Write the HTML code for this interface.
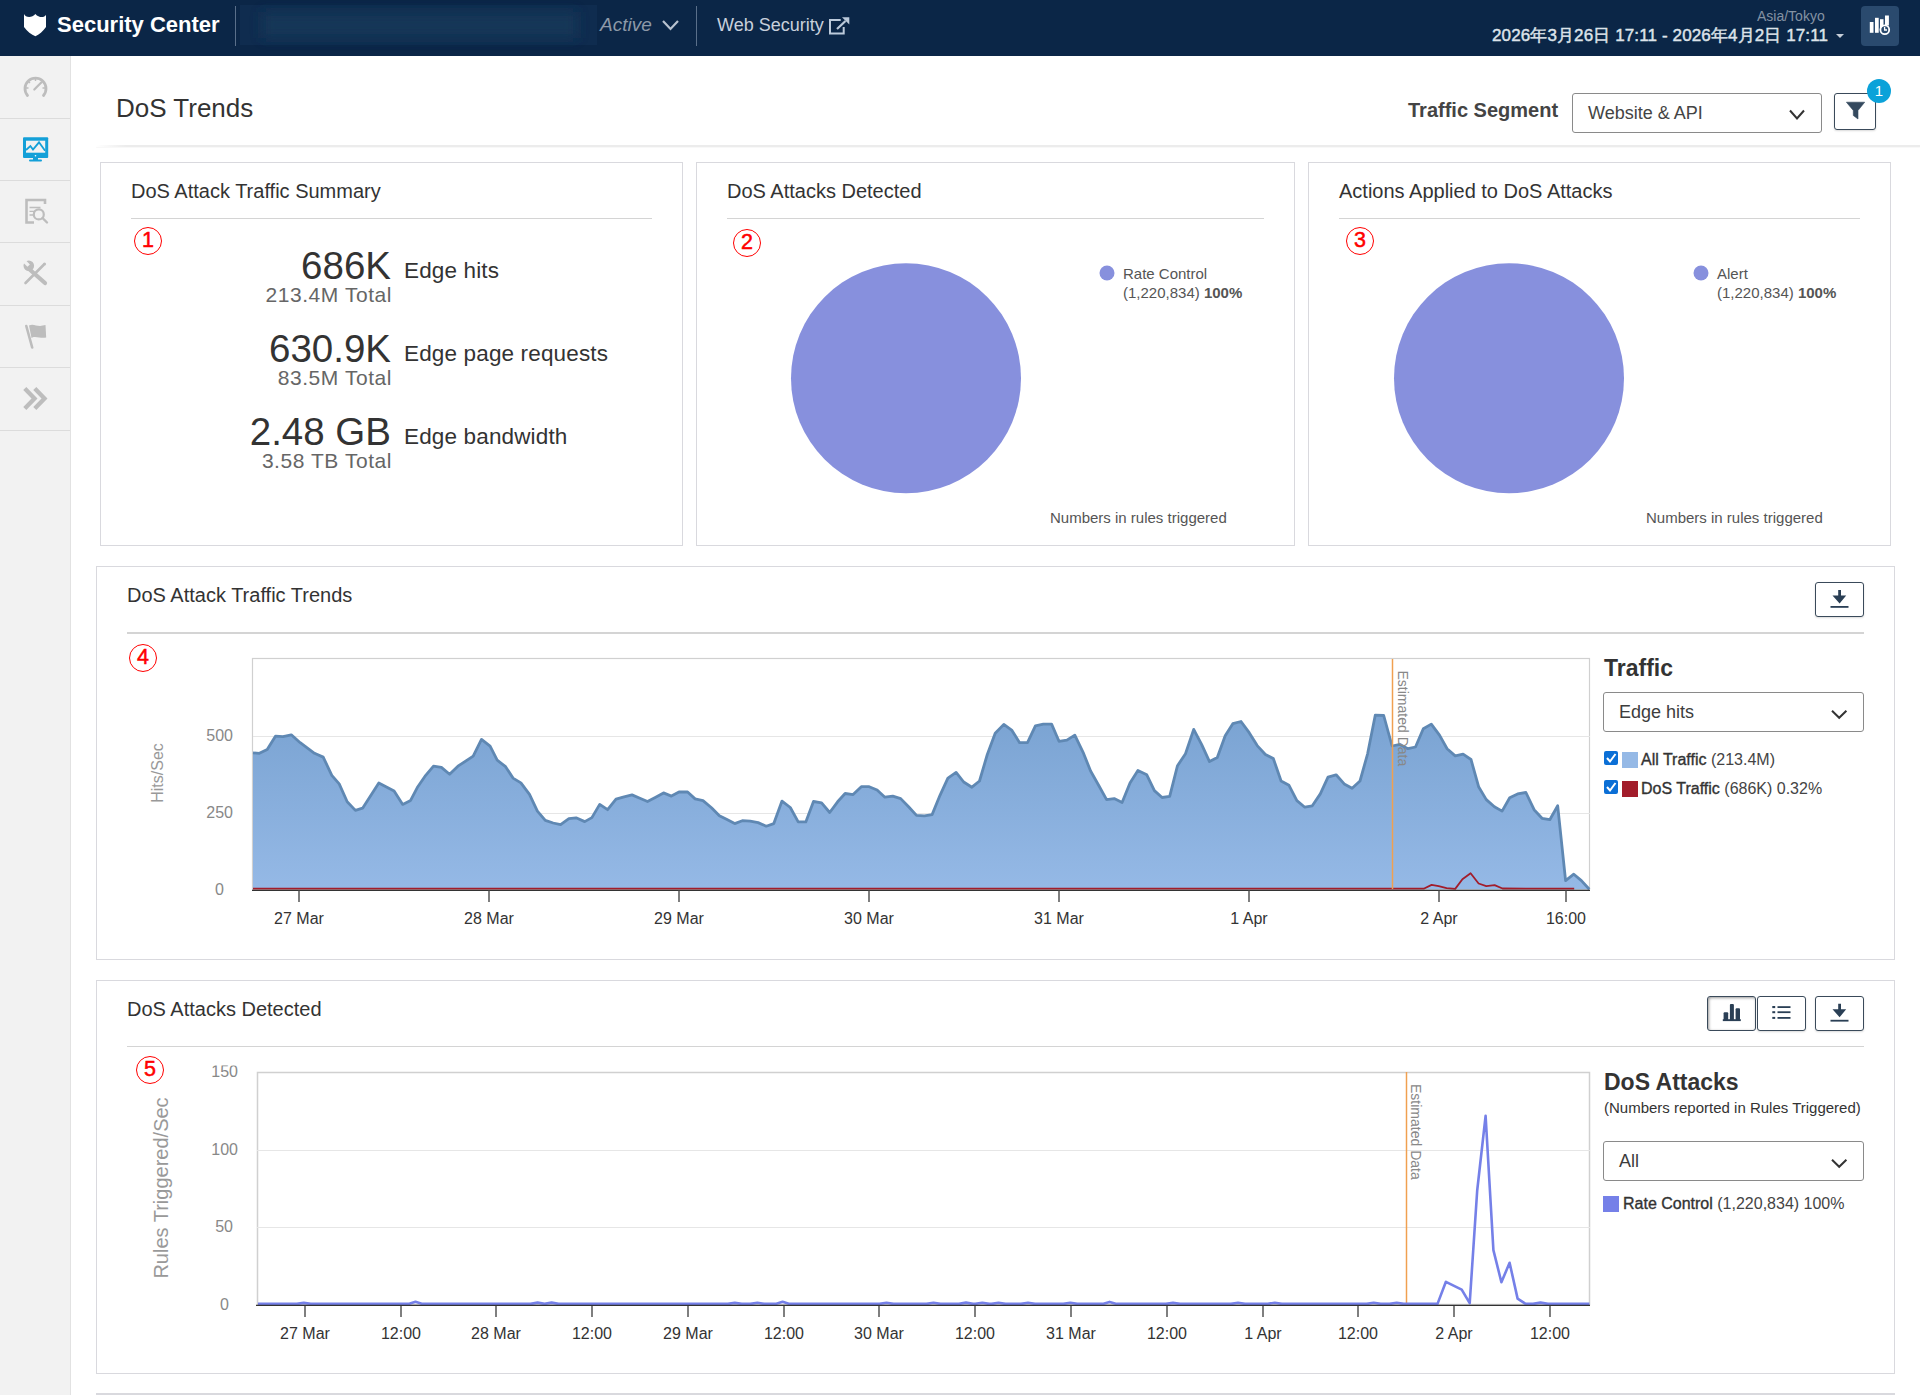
<!DOCTYPE html>
<html><head><meta charset="utf-8">
<style>
*{box-sizing:border-box;margin:0;padding:0}
html,body{width:1920px;height:1395px;overflow:hidden;background:#fff;font-family:"Liberation Sans",sans-serif;color:#333}
.a{position:absolute;white-space:nowrap;line-height:1}
#hdr{position:absolute;left:0;top:0;width:1920px;height:56px;background:#0b2647}
#side{position:absolute;left:0;top:56px;width:71px;height:1339px;background:#f2f2f2;border-right:1px solid #e2e2e2}
.sd{position:absolute;left:0;width:70px;height:1px;background:#dcdcdc}
.card{position:absolute;border:1px solid #d9d9de;background:#fff}
.hr{position:absolute;height:1px;background:#d4d4d4}
.circ{position:absolute;border:1.3px solid #f00;border-radius:50%;color:#f00;font-size:21.5px;text-align:center;line-height:25px;-webkit-text-stroke:0.5px #f00}
.btn{position:absolute;border:1px solid #3a4a5a;border-radius:3px;background:#fff;box-shadow:0 1px 2px rgba(0,0,0,.15)}
.sel{position:absolute;border:1px solid #8a8a8a;border-radius:3px;background:#fff}
</style></head><body>
<div id="hdr"></div>
<!-- header -->
<svg class="a" style="left:0;top:0" width="1920" height="56">
 <defs><filter id="bl" x="-10%" y="-50%" width="120%" height="200%"><feGaussianBlur stdDeviation="6"/></filter></defs>
 <rect x="240" y="5" width="357" height="40" fill="#0f2c4f"/><rect x="262" y="12" width="315" height="26" fill="#183859" filter="url(#bl)" opacity="0.9"/>
 <path d="M24,14 C25.5,17.8 32,18.2 35.4,14 C39,18.2 44.5,17.8 46,14.8 L46,27 C43,31.5 39,34.5 35.4,36.3 C31.5,34.5 27,31.5 24,27 Z" fill="#fff"/>
 <line x1="235.5" y1="6" x2="235.5" y2="46" stroke="#5a6f8a" stroke-width="1"/>
 <line x1="696.5" y1="6" x2="696.5" y2="46" stroke="#5a6f8a" stroke-width="1"/>
 <path d="M663,21 L670.5,29 L678,21" fill="none" stroke="#b8c2cf" stroke-width="2.2"/>
 <g fill="none" stroke="#bccadb" stroke-width="2"><path d="M840.7,19.9 H830 V33.5 H843.7 V27.1"/><path d="M837,29 L845.5,21" stroke-width="2.2"/></g><path d="M842,17.2 H849.3 V24.5 Z" fill="#bccadb"/>
 <path d="M1836,34 L1844,34 L1840,38 Z" fill="#c5cdd8"/>
 <rect x="1861" y="6" width="38" height="40" rx="4" fill="#2a4a6e"/>
 <g fill="#fff"><rect x="1869.8" y="22" width="3.7" height="10.8"/><rect x="1875" y="17.8" width="3.7" height="15"/><rect x="1880" y="19.2" width="3.5" height="10"/><rect x="1885" y="15.5" width="3.9" height="10"/></g>
 <circle cx="1884.8" cy="29.8" r="4.4" fill="#2a4a6e" stroke="#fff" stroke-width="1.8"/>
 <path d="M1884.6,27 V30 H1887" stroke="#fff" stroke-width="1.3" fill="none"/>
</svg>
<div class="a" id="t_sc" style="left:57px;top:14px;font-size:22px;font-weight:bold;color:#fff">Security Center</div>
<div class="a" id="t_act" style="left:600px;top:15px;font-size:19px;font-style:italic;color:#8d99a8">Active</div>
<div class="a" id="t_ws" style="left:717px;top:16px;font-size:18px;color:#c8d0dc">Web Security</div>
<div class="a" id="t_tz" style="left:1757px;top:9px;font-size:14px;color:#8492a3">Asia/Tokyo</div>
<div class="a" id="t_dt" style="left:1492px;top:27px;font-size:17px;letter-spacing:0.12px;-webkit-text-stroke:0.45px #dde3ea;color:#dde3ea">2026年3月26日 17:11 - 2026年4月2日 17:11</div>

<div id="side">
 <div class="sd" style="top:62px"></div><div class="sd" style="top:124px"></div><div class="sd" style="top:186px"></div><div class="sd" style="top:249px"></div><div class="sd" style="top:311px"></div><div class="sd" style="top:374px"></div>
</div>
<svg class="a" style="left:0;top:0" width="70" height="440">
 <path d="M27.5,95.5 A10.5,10.5 0 1 1 43.5,95.5" fill="none" stroke="#bdbdbd" stroke-width="2.8" stroke-linecap="round"/>
 <g stroke="#bdbdbd" stroke-width="1.4"><path d="M35.5,78.5 V81 M28.5,81.5 L30,83 M42.5,81.5 L41,83 M26,88 H28.5 M45,88 H42.5"/></g>
 <path d="M34.3,89.5 L41,82.7" stroke="#bdbdbd" stroke-width="2.2" stroke-linecap="round"/>
 <rect x="23" y="137.3" width="25.2" height="20.7" rx="1" fill="#14a0d8"/>
 <rect x="26" y="140.7" width="19.2" height="12" fill="#f2f2f2"/>
 <path d="M26,150 L30.4,146 L33,149.5 L39,142.3 L45.1,150.8" fill="none" stroke="#14a0d8" stroke-width="1.8"/>
 <circle cx="35.5" cy="155.7" r="0.8" fill="#fff"/>
 <rect x="33" y="158" width="5" height="2" fill="#14a0d8"/><rect x="29" y="159.5" width="13" height="2" rx="1" fill="#14a0d8"/>
 <g fill="none" stroke="#bdbdbd"><path d="M45,204 V200 H26.5 V222.5 H34" stroke-width="2.6"/><path d="M29.5,207.5 H40.5 M29.5,211.3 H35 M29.5,215 H34" stroke-width="1.3"/><circle cx="38.8" cy="214.4" r="5" stroke-width="2.2"/><path d="M42.5,218 L47,222.5" stroke-width="2.4" stroke-linecap="round"/></g>
 <g stroke="#bdbdbd" stroke-linecap="round"><path d="M28.5,268.5 L45,283" stroke-width="4.2"/><path d="M25.5,283 L43.5,265" stroke-width="2.6"/></g>
 <circle cx="28.8" cy="265.8" r="5.3" fill="#bdbdbd"/>
 <rect x="-1.7" y="-5" width="3.4" height="6.5" transform="translate(27.6,264.6) rotate(-45)" fill="#f2f2f2"/>
 <circle cx="44.5" cy="264" r="1.6" fill="#bdbdbd"/>
 <g fill="#bdbdbd"><path d="M26.3,326 L32.2,347.5" stroke="#bdbdbd" stroke-width="2.6" stroke-linecap="round"/><path d="M29,325.5 C33,323.5 36,326 40,326 L45.5,325 L46.2,337.5 C42,338.5 39,337 35,337 C33.5,337 32,337.5 31.5,338 Z"/></g>
 <g fill="none" stroke="#bdbdbd" stroke-width="4.3"><path d="M24.8,388.6 L34.5,398.6 L24.8,408.6"/><path d="M34.8,388.6 L44.5,398.6 L34.8,408.6"/></g>
</svg>

<!-- title row -->
<div class="a" id="t_title" style="left:116px;top:95px;font-size:26px;color:#333">DoS Trends</div>
<div class="a" style="left:96px;top:145px;width:1824px;height:2px;background:linear-gradient(to right,rgba(236,236,236,0) 0,#ececec 30px);box-shadow:0 1px 1px rgba(0,0,0,.03)"></div>
<div class="a" id="t_seg" style="left:1408px;top:100px;font-size:20px;font-weight:bold;color:#444">Traffic Segment</div>
<div class="sel" style="left:1572px;top:93px;width:250px;height:40px"></div>
<div class="a" id="t_wa" style="left:1588px;top:104px;font-size:18px;color:#444">Website &amp; API</div>
<div class="btn" style="left:1834px;top:93px;width:42px;height:37px"></div>

<!-- cards -->
<div class="card" style="left:100px;top:162px;width:583px;height:384px"></div>
<div class="card" style="left:696px;top:162px;width:599px;height:384px"></div>
<div class="card" style="left:1308px;top:162px;width:583px;height:384px"></div>
<div class="card" style="left:96px;top:566px;width:1799px;height:394px"></div>
<div class="card" style="left:96px;top:980px;width:1799px;height:394px"></div>
<div class="a" style="left:96px;top:1393px;width:1799px;height:2px;background:#d9d9de"></div>

<div class="hr" style="left:131px;top:218px;width:521px"></div>
<div class="hr" style="left:727px;top:218px;width:537px"></div>
<div class="hr" style="left:1339px;top:218px;width:521px"></div>
<div class="hr" style="left:127px;top:632px;width:1737px;height:2px"></div>
<div class="hr" style="left:127px;top:1046px;width:1737px"></div>

<div class="a" id="t_c1" style="left:131px;top:181px;font-size:20px;color:#333">DoS Attack Traffic Summary</div>
<div class="a" id="t_c2" style="left:727px;top:181px;font-size:20px;color:#333">DoS Attacks Detected</div>
<div class="a" id="t_c3" style="left:1339px;top:181px;font-size:20px;color:#333">Actions Applied to DoS Attacks</div>
<div class="a" id="t_c4" style="left:127px;top:585px;font-size:20px;color:#333">DoS Attack Traffic Trends</div>
<div class="a" id="t_c5" style="left:127px;top:999px;font-size:20px;color:#333">DoS Attacks Detected</div>

<div class="circ" style="left:134px;top:227px;width:28px;height:28px">1</div>
<div class="circ" style="left:733px;top:229px;width:28px;height:28px">2</div>
<div class="circ" style="left:1346px;top:227px;width:28px;height:28px">3</div>
<div class="circ" style="left:129px;top:644px;width:28px;height:28px">4</div>
<div class="circ" style="left:136px;top:1056px;width:28px;height:28px">5</div>

<!-- card1 stats -->
<div class="a" style="right:1529px;top:247px;font-size:38.5px;color:#333">686K</div>
<div class="a" style="left:404px;top:260px;font-size:22.5px;letter-spacing:0.15px;color:#333">Edge hits</div>
<div class="a" style="right:1528px;top:284px;font-size:21px;letter-spacing:0.55px;color:#666">213.4M Total</div>
<div class="a" style="right:1529px;top:330px;font-size:38.5px;color:#333">630.9K</div>
<div class="a" style="left:404px;top:343px;font-size:22.5px;letter-spacing:0.15px;color:#333">Edge page requests</div>
<div class="a" style="right:1528px;top:367px;font-size:21px;letter-spacing:0.55px;color:#666">83.5M Total</div>
<div class="a" style="right:1529px;top:413px;font-size:38.5px;color:#333">2.48 GB</div>
<div class="a" style="left:404px;top:426px;font-size:22.5px;letter-spacing:0.15px;color:#333">Edge bandwidth</div>
<div class="a" style="right:1528px;top:450px;font-size:21px;letter-spacing:0.55px;color:#666">3.58 TB Total</div>

<!-- pie legends -->
<div class="a" style="left:1123px;top:266px;font-size:15px;color:#555">Rate Control</div>
<div class="a" style="left:1123px;top:285px;font-size:15px;color:#555">(1,220,834) <b>100%</b></div>
<div class="a" style="left:1050px;top:510px;font-size:15px;color:#555">Numbers in rules triggered</div>
<div class="a" style="left:1717px;top:266px;font-size:15px;color:#555">Alert</div>
<div class="a" style="left:1717px;top:285px;font-size:15px;color:#555">(1,220,834) <b>100%</b></div>
<div class="a" style="left:1646px;top:510px;font-size:15px;color:#555">Numbers in rules triggered</div>

<!-- chart buttons -->
<div class="btn" style="left:1815px;top:582px;width:49px;height:35px"></div>
<div class="btn" style="left:1707px;top:996px;width:49px;height:35px;box-shadow:inset 1px 1px 3px rgba(0,0,0,.4)"></div>
<div class="btn" style="left:1757px;top:996px;width:49px;height:35px"></div>
<div class="btn" style="left:1815px;top:996px;width:49px;height:35px"></div>

<!-- chart legends -->
<div class="a" style="left:1604px;top:657px;font-size:23px;font-weight:bold;color:#333">Traffic</div>
<div class="sel" style="left:1603px;top:692px;width:261px;height:40px"></div>
<div class="a" style="left:1619px;top:703px;font-size:18px;color:#3d3d3d">Edge hits</div>
<div class="a" style="left:1641px;top:752px;font-size:16px;color:#333"><span style="-webkit-text-stroke:0.35px #333">All Traffic</span> <span style="color:#444">(213.4M)</span></div>
<div class="a" style="left:1641px;top:781px;font-size:16px;color:#333"><span style="-webkit-text-stroke:0.35px #333">DoS Traffic</span> <span style="color:#444">(686K) 0.32%</span></div>
<div class="a" style="left:1604px;top:1071px;font-size:23px;font-weight:bold;color:#333">DoS Attacks</div>
<div class="a" style="left:1604px;top:1100px;font-size:15px;color:#333">(Numbers reported in Rules Triggered)</div>
<div class="sel" style="left:1603px;top:1141px;width:261px;height:40px"></div>
<div class="a" style="left:1619px;top:1152px;font-size:18px;color:#3d3d3d">All</div>
<div class="a" style="left:1623px;top:1196px;font-size:16px;color:#333"><span style="-webkit-text-stroke:0.35px #333">Rate Control</span> <span style="color:#444">(1,220,834) 100%</span></div>

<!-- chart axis labels -->
<div class="a" style="left:0;top:0;width:0;height:0">
</div>
<svg class="a" style="left:0;top:0" width="1920" height="1395" font-family="Liberation Sans, sans-serif">
 <defs><clipPath id="c150"><rect x="200" y="1065.5" width="60" height="20"/></clipPath><linearGradient id="ag" x1="0" y1="0" x2="0" y2="1"><stop offset="0" stop-color="#7aa3d2"/><stop offset="1" stop-color="#95b9e6"/></linearGradient></defs>
 <!-- select chevrons -->
 <g fill="none" stroke="#333" stroke-width="2"><path d="M1790,110.5 L1797,118.5 L1804,110.5"/><path d="M1832,710.8 L1839.2,717.8 L1846.4,710.8"/><path d="M1832,1159.8 L1839.2,1166.8 L1846.4,1159.8"/></g>
 <!-- filter icon -->
 <path d="M1846.4,102.2 H1864.7 L1858,110.5 V119 L1853.3,115.5 V110.5 Z" fill="#34495e" stroke="#34495e" stroke-width="0.6" stroke-linejoin="round"/>
 <circle cx="1879" cy="91" r="12" fill="#0ba2d9"/>
 <text x="1879" y="96" font-size="15" fill="#fff" text-anchor="middle">1</text>
 <!-- download icons -->
 <g fill="#2a3f55">
 <path d="M1838.2,590 H1841 V595.5 H1846.2 L1839.6,603.5 L1832.5,595.5 H1838.2 Z"/><rect x="1830.5" y="606" width="18" height="1.8"/>
 <path d="M1838.2,1003.7 H1841 V1009.2 H1846.2 L1839.6,1017.3 L1832.5,1009.2 H1838.2 Z"/><rect x="1830.5" y="1019.8" width="18" height="1.8"/>
 <rect x="1723.6" y="1012.3" width="4.6" height="8" rx="1"/><rect x="1729.9" y="1004" width="4" height="16.5" rx="1"/><rect x="1735.6" y="1008.3" width="4.4" height="12" rx="1"/><rect x="1722.8" y="1019.2" width="18" height="1.9"/>
 <rect x="1772.3" y="1006" width="2.9" height="2.1"/><rect x="1772.3" y="1011.2" width="2.9" height="2"/><rect x="1772.3" y="1016.9" width="2.9" height="2"/>
 <rect x="1777.5" y="1006.2" width="13" height="1.8"/><rect x="1777.5" y="1011.3" width="13" height="1.8"/><rect x="1777.5" y="1017" width="13" height="1.8"/></g>
 <!-- pies -->
 <circle cx="906" cy="378.2" r="115" fill="#8790dd"/>
 <circle cx="1107" cy="273" r="7.5" fill="#8790dd"/>
 <circle cx="1509" cy="378.2" r="115" fill="#8790dd"/>
 <circle cx="1701" cy="273" r="7.5" fill="#8790dd"/>
 <!-- chart4 -->
 <rect x="252.5" y="658.5" width="1337" height="231" fill="#fff" stroke="#d0d0d0" stroke-width="1.2"/>
 <line x1="253" y1="736.5" x2="1590" y2="736.5" stroke="#e6e6e6"/>
 <line x1="253" y1="813.5" x2="1590" y2="813.5" stroke="#e6e6e6"/>
 <path d="M253,889 L253.0,752.8 L259.4,753.3 L267.2,749.5 L275.6,736.1 L283.0,736.6 L291.3,734.8 L300.2,742.7 L314.5,753.3 L323.2,757.1 L331.8,775.3 L339.2,783.9 L347.2,801.8 L355.4,810.4 L362.6,808.2 L378.8,782.9 L394.1,791.0 L402.7,804.4 L410.6,800.4 L417.8,786.7 L425.7,775.3 L433.5,766.2 L441.4,767.4 L449.6,774.3 L457.9,766.2 L473.2,756.2 L481.5,739.4 L490.1,746.2 L497.2,760.2 L505.6,766.7 L513.0,778.1 L520.9,782.9 L529.5,794.3 L537.4,811.1 L545.3,820.4 L553.2,823.0 L560.6,824.7 L568.9,818.7 L576.1,817.8 L584.7,821.6 L591.9,817.6 L599.7,804.4 L607.6,809.7 L616.0,799.2 L624.1,796.8 L632.0,794.9 L639.9,798.2 L647.5,801.5 L655.7,797.2 L663.5,792.9 L671.4,796.1 L679.0,792.0 L687.6,792.0 L695.1,798.9 L703.0,800.6 L711.5,807.8 L719.4,815.8 L726.5,819.3 L734.7,823.6 L742.3,820.7 L750.2,821.1 L758.1,822.6 L766.2,826.2 L773.8,823.6 L782.0,801.1 L790.3,807.5 L798.2,821.9 L805.8,821.9 L813.5,801.5 L821.6,802.9 L829.7,812.5 L837.6,801.8 L845.1,793.5 L853.1,794.6 L861.3,786.7 L869.2,786.7 L877.1,790.0 L884.9,797.2 L892.8,796.1 L900.7,798.6 L908.6,806.8 L916.5,815.4 L924.4,815.8 L932.1,814.6 L940.0,795.3 L947.9,778.1 L956.1,772.4 L963.7,782.0 L971.9,787.2 L979.5,781.0 L987.3,754.5 L995.2,733.3 L1003.8,724.4 L1012.0,730.4 L1019.6,742.7 L1027.5,742.7 L1035.4,725.8 L1043.3,724.1 L1051.6,724.1 L1059.0,741.3 L1066.9,740.1 L1074.8,735.1 L1083.1,752.3 L1090.6,771.0 L1098.9,785.7 L1106.6,799.6 L1114.2,798.6 L1122.1,802.5 L1130.0,782.9 L1137.9,770.5 L1146.8,774.8 L1154.4,790.6 L1162.1,797.5 L1169.7,796.3 L1177.5,765.7 L1185.5,753.8 L1193.7,729.4 L1201.6,744.4 L1209.5,761.6 L1217.3,757.6 L1225.2,735.8 L1232.8,723.7 L1241.0,721.5 L1249.2,732.7 L1257.2,745.6 L1265.4,754.5 L1273.3,758.5 L1281.1,781.0 L1289.0,785.3 L1296.9,800.6 L1304.8,807.2 L1312.3,805.8 L1320.3,793.9 L1328.0,777.1 L1336.1,774.8 L1344.2,783.9 L1352.1,788.2 L1360.0,781.0 L1367.6,753.8 L1375.3,715.1 L1383.7,715.5 L1392.1,746.0 L1400.0,744.4 L1407.9,748.7 L1415.5,747.0 L1423.3,728.7 L1431.3,724.1 L1439.5,735.1 L1447.1,748.7 L1455.2,755.9 L1463.1,754.2 L1471.0,759.5 L1478.6,786.7 L1486.3,799.6 L1494.4,806.8 L1502.1,811.1 L1509.7,797.8 L1517.6,793.9 L1525.9,792.5 L1534.1,809.7 L1542.0,818.3 L1549.8,819.7 L1557.7,805.8 L1565.6,880.6 L1573.8,874.2 L1581.4,880.6 L1589.3,889.2 Z" fill="url(#ag)"/>
 <polyline points="253.0,752.8 259.4,753.3 267.2,749.5 275.6,736.1 283.0,736.6 291.3,734.8 300.2,742.7 314.5,753.3 323.2,757.1 331.8,775.3 339.2,783.9 347.2,801.8 355.4,810.4 362.6,808.2 378.8,782.9 394.1,791.0 402.7,804.4 410.6,800.4 417.8,786.7 425.7,775.3 433.5,766.2 441.4,767.4 449.6,774.3 457.9,766.2 473.2,756.2 481.5,739.4 490.1,746.2 497.2,760.2 505.6,766.7 513.0,778.1 520.9,782.9 529.5,794.3 537.4,811.1 545.3,820.4 553.2,823.0 560.6,824.7 568.9,818.7 576.1,817.8 584.7,821.6 591.9,817.6 599.7,804.4 607.6,809.7 616.0,799.2 624.1,796.8 632.0,794.9 639.9,798.2 647.5,801.5 655.7,797.2 663.5,792.9 671.4,796.1 679.0,792.0 687.6,792.0 695.1,798.9 703.0,800.6 711.5,807.8 719.4,815.8 726.5,819.3 734.7,823.6 742.3,820.7 750.2,821.1 758.1,822.6 766.2,826.2 773.8,823.6 782.0,801.1 790.3,807.5 798.2,821.9 805.8,821.9 813.5,801.5 821.6,802.9 829.7,812.5 837.6,801.8 845.1,793.5 853.1,794.6 861.3,786.7 869.2,786.7 877.1,790.0 884.9,797.2 892.8,796.1 900.7,798.6 908.6,806.8 916.5,815.4 924.4,815.8 932.1,814.6 940.0,795.3 947.9,778.1 956.1,772.4 963.7,782.0 971.9,787.2 979.5,781.0 987.3,754.5 995.2,733.3 1003.8,724.4 1012.0,730.4 1019.6,742.7 1027.5,742.7 1035.4,725.8 1043.3,724.1 1051.6,724.1 1059.0,741.3 1066.9,740.1 1074.8,735.1 1083.1,752.3 1090.6,771.0 1098.9,785.7 1106.6,799.6 1114.2,798.6 1122.1,802.5 1130.0,782.9 1137.9,770.5 1146.8,774.8 1154.4,790.6 1162.1,797.5 1169.7,796.3 1177.5,765.7 1185.5,753.8 1193.7,729.4 1201.6,744.4 1209.5,761.6 1217.3,757.6 1225.2,735.8 1232.8,723.7 1241.0,721.5 1249.2,732.7 1257.2,745.6 1265.4,754.5 1273.3,758.5 1281.1,781.0 1289.0,785.3 1296.9,800.6 1304.8,807.2 1312.3,805.8 1320.3,793.9 1328.0,777.1 1336.1,774.8 1344.2,783.9 1352.1,788.2 1360.0,781.0 1367.6,753.8 1375.3,715.1 1383.7,715.5 1392.1,746.0 1400.0,744.4 1407.9,748.7 1415.5,747.0 1423.3,728.7 1431.3,724.1 1439.5,735.1 1447.1,748.7 1455.2,755.9 1463.1,754.2 1471.0,759.5 1478.6,786.7 1486.3,799.6 1494.4,806.8 1502.1,811.1 1509.7,797.8 1517.6,793.9 1525.9,792.5 1534.1,809.7 1542.0,818.3 1549.8,819.7 1557.7,805.8 1565.6,880.6 1573.8,874.2 1581.4,880.6 1589.3,889.2" fill="none" stroke="#5f88b3" stroke-width="2.8" stroke-linejoin="round"/>
 <polyline points="253.0,888.7 1423.7,888.7 1431.6,884.9 1438.7,886.1 1446.6,888.1 1455.2,888.9 1462.4,879.2 1470.6,873.2 1478.6,883.5 1486.3,886.1 1494.6,885.2 1502.5,888.5 1574.2,888.7" fill="none" stroke="#a21d2b" stroke-width="1.8" stroke-linejoin="round"/>
 <line x1="1392.5" y1="659" x2="1392.5" y2="889" stroke="#f0a050" stroke-width="1.5"/>
 <line x1="252" y1="890.3" x2="1590" y2="890.3" stroke="#333" stroke-width="1.3"/>
 <g stroke="#555" stroke-width="1.5"><path d="M299,890.5 V902 M489,890.5 V902 M679,890.5 V902 M869,890.5 V902 M1059,890.5 V902 M1249,890.5 V902 M1439,890.5 V902 M1566,890.5 V902"/></g>
 <g font-size="16" fill="#333" text-anchor="middle"><text x="299" y="924">27 Mar</text><text x="489" y="924">28 Mar</text><text x="679" y="924">29 Mar</text><text x="869" y="924">30 Mar</text><text x="1059" y="924">31 Mar</text><text x="1249" y="924">1 Apr</text><text x="1439" y="924">2 Apr</text><text x="1566" y="924">16:00</text></g>
 <g font-size="16" fill="#888" text-anchor="end"><text x="233" y="741">500</text><text x="233" y="818">250</text><text x="224" y="895">0</text></g>
 <text transform="translate(163,773) rotate(-90)" font-size="16" fill="#999" text-anchor="middle">Hits/Sec</text>
 <text transform="translate(1398,670.5) rotate(90)" font-size="14" fill="#888">Estimated Data</text>
 <!-- legend chart4 -->
 <rect x="1604" y="751" width="14" height="14" rx="2" fill="#0b6fd6"/><path d="M1607,758 L1610,761.5 L1615.5,754" fill="none" stroke="#fff" stroke-width="2"/>
 <rect x="1604" y="780" width="14" height="14" rx="2" fill="#0b6fd6"/><path d="M1607,787 L1610,790.5 L1615.5,783" fill="none" stroke="#fff" stroke-width="2"/>
 <rect x="1622" y="752" width="16" height="16" fill="#95b9e6"/>
 <rect x="1622" y="781" width="16" height="16" fill="#a21d2b"/>
 <!-- chart5 -->
 <rect x="257.5" y="1072.5" width="1332" height="232" fill="#fff" stroke="#d0d0d0" stroke-width="1.5"/>
 <line x1="257" y1="1150.5" x2="1590" y2="1150.5" stroke="#e6e6e6"/>
 <line x1="257" y1="1227.5" x2="1590" y2="1227.5" stroke="#e6e6e6"/>
 <line x1="1406.5" y1="1072" x2="1406.5" y2="1304" stroke="#f0a050" stroke-width="1.5"/>
 <polyline points="258.0,1303.9 296.8,1303.9 303.8,1302.9 310.8,1303.9 408.5,1303.9 415.5,1301.7 422.5,1303.9 530.6,1303.9 537.6,1302.6 544.6,1303.9 544.6,1303.9 551.6,1302.6 558.6,1303.9 727.8,1303.9 734.8,1302.9 741.8,1303.9 750.4,1303.9 757.4,1302.7 764.4,1303.9 775.6,1303.9 782.6,1301.7 789.6,1303.9 879.5,1303.9 886.5,1302.7 893.5,1303.9 926.5,1303.9 933.5,1302.7 940.5,1303.9 959.0,1303.9 966.0,1302.6 973.0,1303.9 975.3,1303.9 982.3,1302.7 989.3,1303.9 991.5,1303.9 998.5,1302.7 1005.5,1303.9 1021.0,1303.9 1028.0,1302.7 1035.0,1303.9 1063.3,1303.9 1070.3,1302.7 1077.3,1303.9 1102.6,1303.9 1109.6,1301.9 1116.6,1303.9 1166.0,1303.9 1173.0,1302.9 1180.0,1303.9 1231.0,1303.9 1238.0,1302.7 1245.0,1303.9 1267.8,1303.9 1274.8,1302.7 1281.8,1303.9 1366.7,1303.9 1373.7,1302.7 1380.7,1303.9 1389.7,1303.9 1396.7,1302.7 1403.7,1303.9 1437.5,1303.9 1445.9,1281.8 1461.7,1289.6 1469.7,1303.2 1477.2,1190.5 1485.6,1115.9 1493.4,1250.1 1501.4,1282.2 1509.6,1262.8 1517.6,1298.6 1525.6,1303.9 1533.0,1303.9 1540.5,1302.6 1548.0,1303.9 1589.4,1303.9" fill="none" stroke="#7580e8" stroke-width="2.6" stroke-linejoin="round"/>
 <line x1="256" y1="1305.3" x2="1590" y2="1305.3" stroke="#333" stroke-width="1.2"/>
 <g stroke="#555" stroke-width="1.5"><path d="M305,1306 V1317 M401,1306 V1317 M496,1306 V1317 M592,1306 V1317 M688,1306 V1317 M784,1306 V1317 M879,1306 V1317 M975,1306 V1317 M1071,1306 V1317 M1167,1306 V1317 M1263,1306 V1317 M1358,1306 V1317 M1454,1306 V1317 M1550,1306 V1317"/></g>
 <g font-size="16" fill="#333" text-anchor="middle"><text x="305" y="1339">27 Mar</text><text x="401" y="1339">12:00</text><text x="496" y="1339">28 Mar</text><text x="592" y="1339">12:00</text><text x="688" y="1339">29 Mar</text><text x="784" y="1339">12:00</text><text x="879" y="1339">30 Mar</text><text x="975" y="1339">12:00</text><text x="1071" y="1339">31 Mar</text><text x="1167" y="1339">12:00</text><text x="1263" y="1339">1 Apr</text><text x="1358" y="1339">12:00</text><text x="1454" y="1339">2 Apr</text><text x="1550" y="1339">12:00</text></g>
 <g font-size="16" fill="#888" text-anchor="end"><text x="238" y="1077" clip-path="url(#c150)">150</text><text x="238" y="1155">100</text><text x="233" y="1232">50</text><text x="229" y="1310">0</text></g>
 <text transform="translate(168,1188) rotate(-90)" font-size="20" fill="#999" text-anchor="middle">Rules Triggered/Sec</text>
 <text transform="translate(1411,1084) rotate(90)" font-size="14" fill="#888">Estimated Data</text>
 <rect x="1603" y="1196" width="16" height="16" fill="#7580e8"/>
</svg>
</body></html>
